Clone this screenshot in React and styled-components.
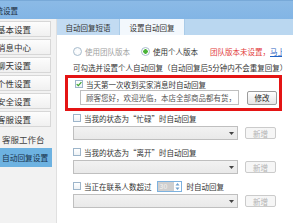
import React from "react";
import styled, { createGlobalStyle } from "styled-components";

const GlobalStyle = createGlobalStyle`
  html, body {
    margin: 0;
    padding: 0;
    width: 293px;
    height: 223px;
    overflow: hidden;
    background: #fff;
  }
  body {
    font-family: "Noto Sans CJK SC", "Liberation Sans", sans-serif;
    font-size: 7.5px;
    color: #333;
  }
`;

const Window = styled.div`
  display: flex;
  flex-direction: column;
  width: 293px;
  height: 223px;
`;

const TitleBar = styled.div`
  height: 19px;
  flex-shrink: 0;
  display: flex;
  align-items: center;
  background: linear-gradient(#8bbae6, #82b5e5);
  border-top: 1px solid #78a9d8;
  box-sizing: border-box;
  span {
    margin-left: -12px;
    font-size: 7.5px;
    color: #1c2c3c;
    white-space: nowrap;
  }
`;

const Body = styled.div`
  flex: 1;
  display: flex;
  min-height: 0;
`;

const Sidebar = styled.div`
  width: 57px;
  flex-shrink: 0;
  box-sizing: border-box;
  padding-top: 2px;
  background: #f2f2f2;
  border-right: 1px solid #e0e0e0;
  display: flex;
  flex-direction: column;
`;

const NavItem = styled.div`
  margin-left: -4px;
  width: 55px;
  height: 16px;
  margin-bottom: 2px;
  box-sizing: border-box;
  border: 1px solid #d7d7d7;
  background: linear-gradient(#fdfdfd, #f0f0f0);
  display: flex;
  align-items: center;
  font-size: 8.5px;
  color: #333;
  white-space: nowrap;
  overflow: hidden;
`;

const SubItem = styled.div`
  height: 19px;
  padding-left: 2px;
  display: flex;
  align-items: center;
  font-size: 8.5px;
  color: #444;
  white-space: nowrap;
  background: ${(p) => (p.$active ? "#6db2e1" : "transparent")};
  width: ${(p) => (p.$active ? "52px" : "auto")};
  ${(p) => p.$active && "font-size: 7.7px; color: #17314a;"}
  box-sizing: border-box;
`;

const Content = styled.div`
  flex: 1;
  display: flex;
  flex-direction: column;
  background: #fff;
  min-width: 0;
`;

const TabStrip = styled.div`
  height: 16px;
  flex-shrink: 0;
  display: flex;
  background: #bad7f0;
`;

const Tab = styled.div`
  width: ${(p) => p.$w}px;
  display: flex;
  align-items: center;
  justify-content: center;
  box-sizing: border-box;
  background: ${(p) => (p.$active ? "#f3f8fd" : "#c2dbf2")};
  border-right: 1px solid #a9cbe8;
  color: #333;
  white-space: nowrap;
`;

const Panel = styled.div`
  flex: 1;
  padding: 0 11px 0 8px;
  display: flex;
  flex-direction: column;
`;

const RadioRow = styled.div`
  margin-top: 10px;
  margin-left: 8px;
  height: 12px;
  display: flex;
  align-items: center;
  white-space: nowrap;
  overflow: hidden;
`;

const RadioItem = styled.label`
  display: flex;
  align-items: center;
  gap: 3px;
  margin-right: ${(p) => p.$mr}px;
  color: ${(p) => (p.$muted ? "#a0a0a0" : "#333")};
`;

const Radio = styled.span`
  width: 9px;
  height: 9px;
  box-sizing: border-box;
  border-radius: 50%;
  border: 1px solid #a8bccd;
  background: radial-gradient(
    circle,
    ${(p) => (p.$on ? "#4ab338 0 2px, #fff 2.5px" : "#fff 0, #f2f5f8 100%")}
  );
`;

const Warn = styled.span`
  color: #e23b3b;
`;

const Link = styled.span`
  color: #1f63c4;
  text-decoration: underline;
`;

const Hint = styled.div`
  margin-left: 8px;
  height: 12px;
  margin-top: 4px;
  display: flex;
  align-items: center;
  white-space: nowrap;
  color: #333;
`;

const Highlight = styled.div`
  margin-top: 2px;
  height: 36px;
  box-sizing: border-box;
  border: 3px solid #e41414;
  padding: 1px 2px 0 4px;
  display: flex;
  flex-direction: column;
`;

const CheckRow = styled.div`
  height: ${(p) => p.$h || 12}px;
  margin-top: ${(p) => p.$mt || 0}px;
  margin-left: ${(p) => p.$ml || 8}px;
  display: flex;
  align-items: center;
  gap: 3px;
  white-space: nowrap;
  color: #333;
`;

const Checkbox = styled.span`
  width: 8px;
  height: 8px;
  box-sizing: border-box;
  border: 1px solid #9db5ca;
  background: linear-gradient(#fff, #eef2f5);
  display: flex;
  align-items: center;
  justify-content: center;
  svg {
    display: block;
  }
`;

const FieldRow = styled.div`
  margin-top: ${(p) => p.$mt || 2}px;
  margin-left: ${(p) => p.$ml || 8}px;
  display: flex;
  align-items: center;
  gap: ${(p) => p.$gap || 7}px;
`;

const Select = styled.div`
  width: 165px;
  height: ${(p) => (p.$tall ? 15 : 14)}px;
  box-sizing: border-box;
  border: 1px solid #bfbfbf;
  background: ${(p) => (p.$disabled ? "linear-gradient(#f2f2f2, #e9e9e9)" : "#fff")};
  display: flex;
  align-items: center;
  padding-left: 5px;
  color: #555;
  white-space: nowrap;
  overflow: hidden;
  span {
    flex: 1;
  }
  svg {
    margin: 0 3px 0 4px;
    flex-shrink: 0;
  }
`;

const Button = styled.div`
  width: 31px;
  height: ${(p) => (p.$disabled ? 12 : 14)}px;
  box-sizing: border-box;
  border: 1px solid ${(p) => (p.$disabled ? "#cbcbcb" : "#9c9c9c")};
  border-radius: 2px;
  background: ${(p) =>
    p.$disabled ? "#f6f6f6" : "linear-gradient(#ffffff, #e6e6e6)"};
  color: ${(p) => (p.$disabled ? "#b4b4b4" : "#222")};
  display: flex;
  align-items: center;
  justify-content: center;
`;

const Spin = styled.span`
  width: 25px;
  height: 11px;
  box-sizing: border-box;
  border: 1px solid #7db2df;
  display: flex;
  background: #fff;
  margin: 0 2px;
  span {
    flex: 1;
    background: #cfcfcf;
    color: #f4f4f4;
    font-size: 7px;
    line-height: 9px;
    padding-left: 2px;
  }
  svg {
    display: block;
    margin: 0 1px;
  }
`;

const Arrow = () => (
  <svg width="5" height="3" viewBox="0 0 5 3">
    <path d="M0 0h5L2.5 3z" fill="#444" />
  </svg>
);

const Tick = () => (
  <svg width="7" height="6" viewBox="0 0 7 6">
    <path d="M0.8 3.2L2.7 5 6.3 0.8" fill="none" stroke="#3aa52c" strokeWidth="1.4" />
  </svg>
);

const SpinArrows = () => (
  <svg width="5" height="9" viewBox="0 0 5 9">
    <path d="M0.5 3.5L2.5 1 4.5 3.5z" fill="#6f9fcc" />
    <path d="M0.5 5.5L2.5 8 4.5 5.5z" fill="#6f9fcc" />
  </svg>
);

const navItems = ["基本设置", "消息中心", "聊天设置", "个性设置", "安全设置", "客服设置"];

const rules = [
  { label: "当我的状态为“忙碌”时自动回复", mt: 1 },
  { label: "当我的状态为“离开”时自动回复", mt: 6 },
];

export default function App() {
  return (
    <Window>
      <GlobalStyle />
      <TitleBar>
        <span>系统设置</span>
      </TitleBar>
      <Body>
        <Sidebar>
          {navItems.map((n) => (
            <NavItem key={n}>{n}</NavItem>
          ))}
          <SubItem>客服工作台</SubItem>
          <SubItem $active>自动回复设置</SubItem>
        </Sidebar>
        <Content>
          <TabStrip>
            <Tab $w={63}>自动回复短语</Tab>
            <Tab $w={65} $active>设置自动回复</Tab>
          </TabStrip>
          <Panel>
            <RadioRow>
              <RadioItem $muted $mr={11}>
                <Radio />
                使用团队版本
              </RadioItem>
              <RadioItem $mr={12}>
                <Radio $on />
                使用个人版本
              </RadioItem>
              <Warn>团队版本未设置，</Warn>
              <Link>马上设置</Link>
            </RadioRow>
            <Hint>可勾选并设置个人自动回复（自动回复后5分钟内不会重复回复）</Hint>
            <Highlight>
              <CheckRow $h={10} $ml={3}>
                <Checkbox>
                  <Tick />
                </Checkbox>
                当天第一次收到买家消息时自动回复
              </CheckRow>
              <FieldRow $mt={1} $ml={0} $gap={8}>
                <Select $tall>
                  <span>顾客您好，欢迎光临，本店全部商品都有货，</span>
                  <Arrow />
                </Select>
                <Button>修改</Button>
              </FieldRow>
            </Highlight>
            {rules.map((r) => (
              <React.Fragment key={r.label}>
                <CheckRow $mt={r.mt}>
                  <Checkbox />
                  {r.label}
                </CheckRow>
                <FieldRow>
                  <Select $disabled>
                    <span />
                    <Arrow />
                  </Select>
                  <Button $disabled>新增</Button>
                </FieldRow>
              </React.Fragment>
            ))}
            <CheckRow $mt={6}>
              <Checkbox />
              当正在联系人数超过
              <Spin>
                <span>30</span>
                <SpinArrows />
              </Spin>
              时自动回复
            </CheckRow>
            <FieldRow>
              <Select $disabled>
                <span />
                <Arrow />
              </Select>
              <Button $disabled>新增</Button>
            </FieldRow>
          </Panel>
        </Content>
      </Body>
    </Window>
  );
}
